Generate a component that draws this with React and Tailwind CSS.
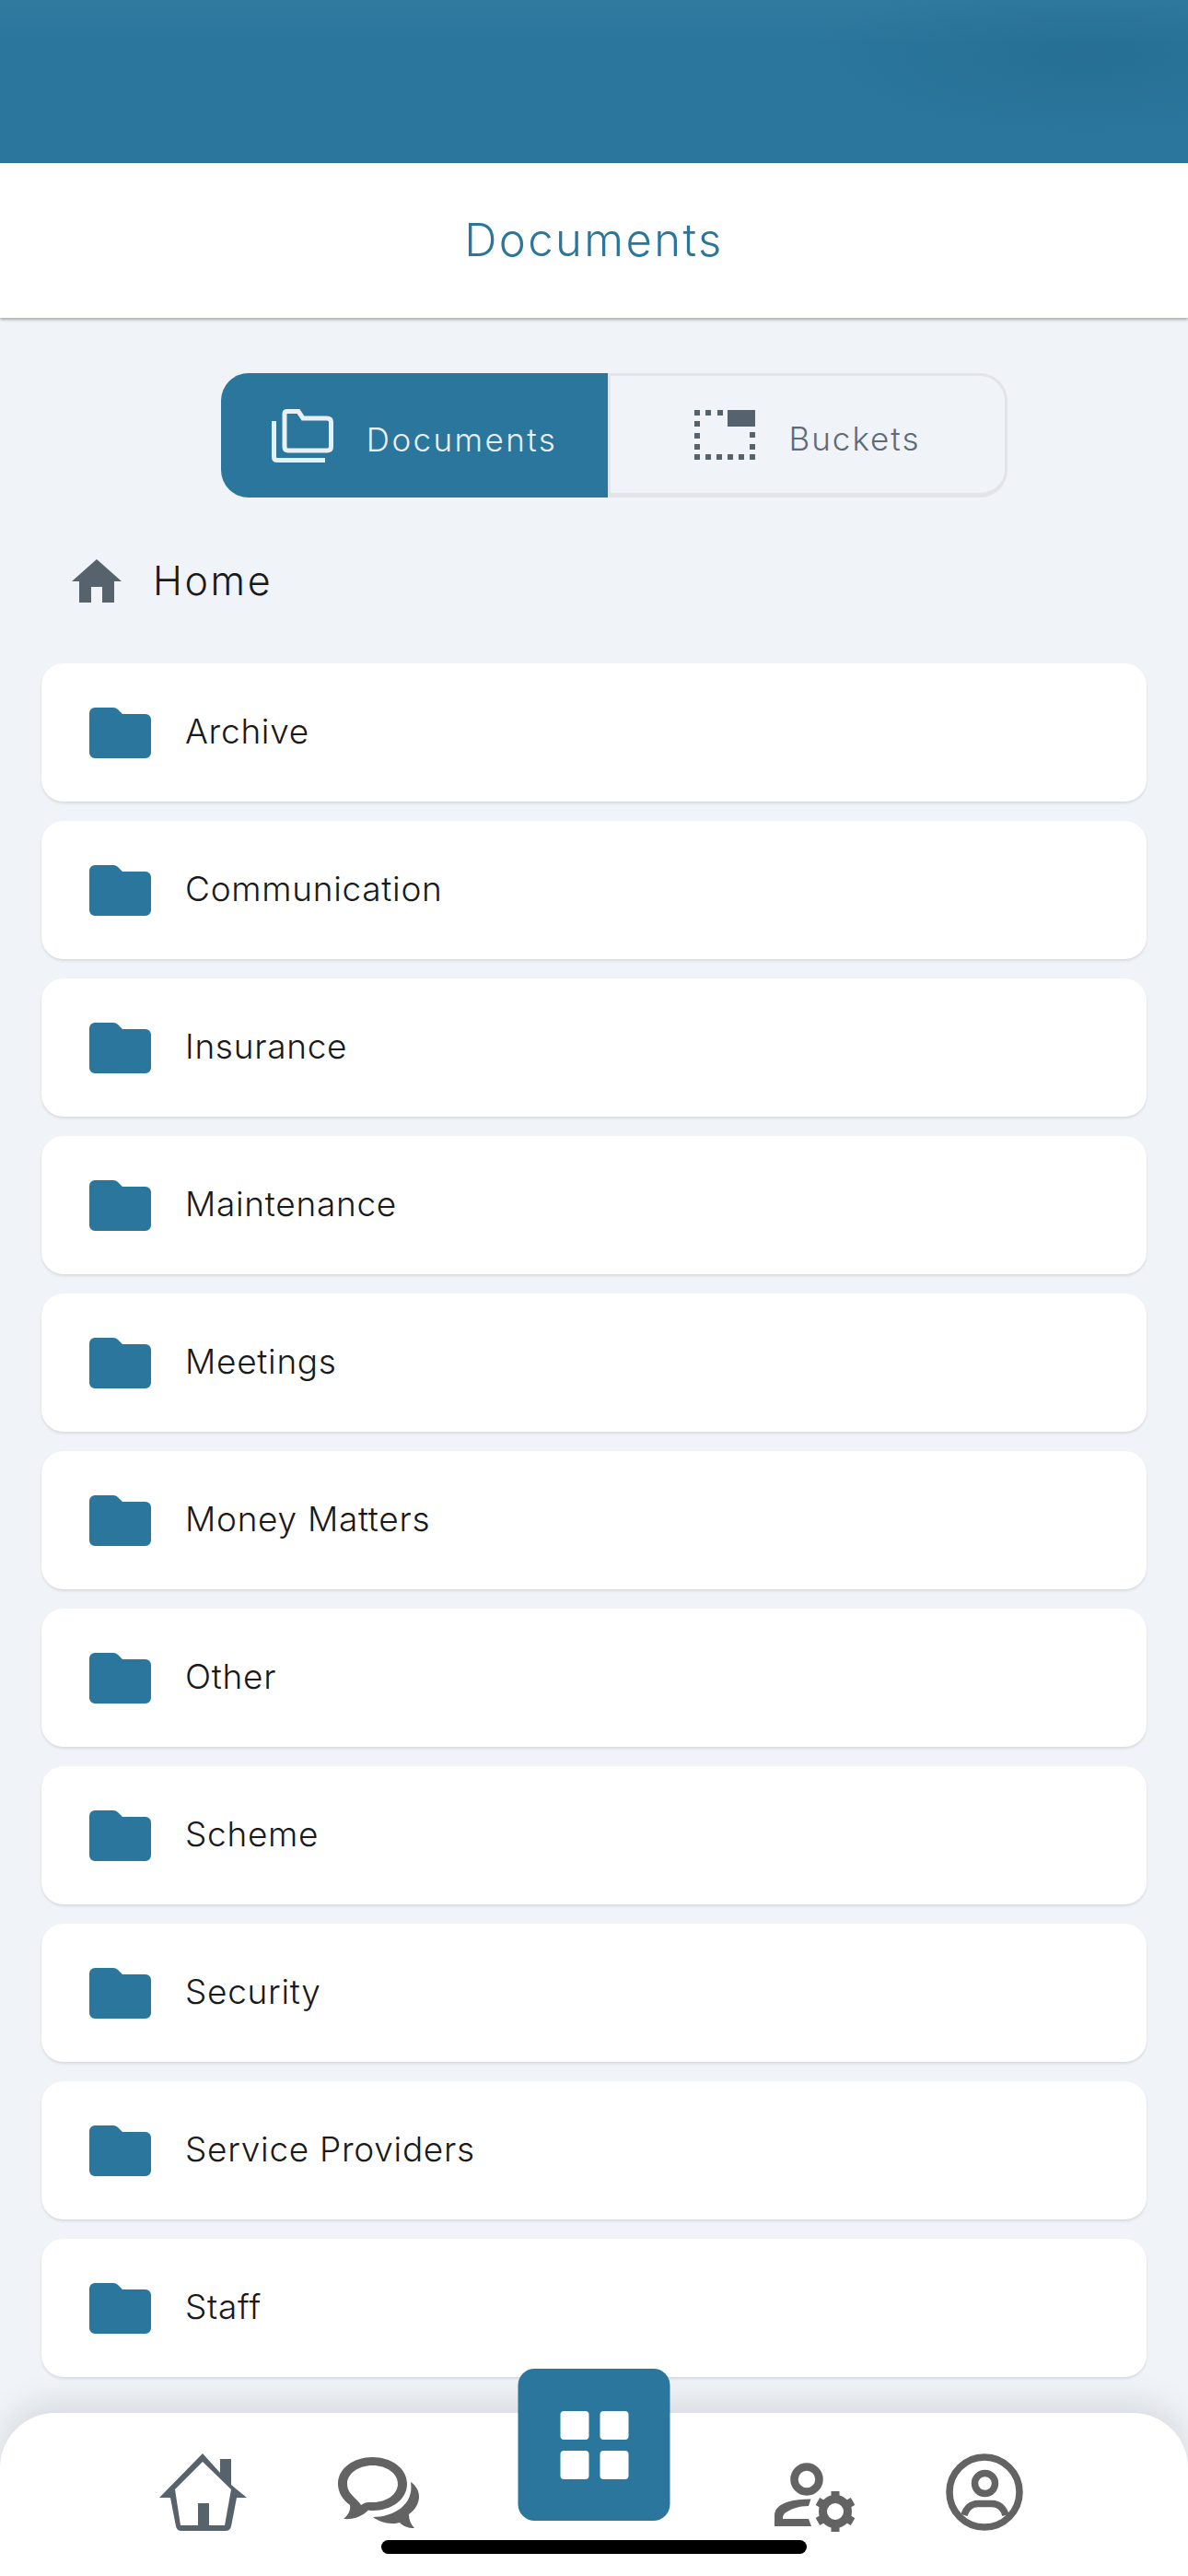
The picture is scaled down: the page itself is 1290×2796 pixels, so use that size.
import React from 'react';

const FOLDERS = [
    'Archive',
    'Communication',
    'Insurance',
    'Maintenance',
    'Meetings',
    'Money Matters',
    'Other',
    'Scheme',
    'Security',
    'Service Providers',
    'Staff',
];

const BUCKET_DOTS = [
    [0, 0], [12, 0], [25, 0],
    [0, 12], [0, 25], [0, 37],
    [60, 24], [60, 37],
    [0, 48], [12, 48], [24, 48], [36, 48], [48, 48], [60, 48],
];

function FolderIcon() {
    return (
        <svg width="67" height="55" viewBox="0 0 67 55" className="shrink-0">
            <path
                fill="#2a769c"
                d="M6 0H26Q29 0 31 2L36 7H61A6 6 0 0 1 67 13V49A6 6 0 0 1 61 55H6A6 6 0 0 1 0 49V6A6 6 0 0 1 6 0Z"
            />
        </svg>
    );
}

function TabFolderIcon() {
    return (
        <svg width="67" height="58" viewBox="0 0 67 58" fill="none" stroke="#e9f0f4" strokeWidth="5">
            <path d="M17 2.500H29L34 10H60Q64.500 10 64.500 14V41Q64.500 45 60 45H18Q14 45 14 41V5Q14 2.500 17 2.500Z" />
            <path d="M2.500 13V52Q2.500 55.500 6 55.500H58" />
        </svg>
    );
}

function BucketIcon() {
    return (
        <svg width="66" height="54" viewBox="0 0 66 54" fill="#56636d">
            <rect x="36" y="0" width="30" height="18" />
            {BUCKET_DOTS.map(([x, y]) => (
                <rect key={`${x}-${y}`} x={x} y={y} width="6" height="6" />
            ))}
        </svg>
    );
}

function SmallHomeIcon() {
    return (
        <svg width="54" height="47" viewBox="0 0 54 47" fill="#56636d">
            <path fillRule="evenodd" d="M27 0L54 24H46V47H33V30H21V47H8V24H0Z" />
        </svg>
    );
}

function NavHomeIcon() {
    return (
        <svg width="95" height="84" viewBox="0 0 95 84" fill="#56636d">
            <path
                fillRule="evenodd"
                d="M47 0L66 21V6H78V34L95 48H84L78 79Q77 84 72 84H24Q19 84 18 79L12 48H0ZM47 9L17 39L23 78H42V54H54V78H71L78 39Z"
            />
        </svg>
    );
}

function ChatIcon() {
    return (
        <svg width="88" height="77" viewBox="0 0 88 77" fill="#636363">
            <path
                fillRule="evenodd"
                d="M37.500 0C58 0 75 12 75 29C75 46 58 58 38 58C36 58 34.500 58 33 57.500C27 64 17 68 6 67C11 63 14 58 13 52C5 46 0 38 0 29C0 12 17 0 37.500 0ZM37.500 9C22 9 10 18 10 29C10 37 15 41 20 46C23 49 24 50 25 52C28 50 30 49 34 49C36 49 37 49 38 49C53 49 65 40 65 29C65 18 53 9 37.500 9Z"
            />
            <path d="M79 27C85 31 88 37 88 43C88 50 84 57 77 62C77 68 79 73 83 77C76 77 71 75 67 71C64 72 61 72 58 72C51 72 43 69 38 65C60 65 83 52 79 27Z" />
        </svg>
    );
}

function PersonGearIcon() {
    const teeth = [0, 60, 120, 180, 240, 300];
    return (
        <svg width="87" height="75" viewBox="0 0 87 75" fill="#636363">
            <circle cx="35" cy="18" r="13.500" fill="none" stroke="#636363" strokeWidth="8.500" />
            <path d="M39.500 39.500L37 47C26 47 18 50 11 55Q9 57 9 61H37L40 69H0V58C0 50 5 46 13 43C21 40 30 39.500 39.500 39.500Z" />
            <circle cx="66" cy="53" r="13.500" fill="none" stroke="#636363" strokeWidth="9" />
            {teeth.map((deg) => (
                <rect key={deg} x="61.500" y="31" width="9" height="9" transform={`rotate(${deg} 66 53)`} />
            ))}
        </svg>
    );
}

function ProfileIcon() {
    return (
        <svg width="84" height="84" viewBox="0 0 84 84" fill="none" stroke="#636363" strokeWidth="7.500">
            <circle cx="42" cy="42" r="38" />
            <circle cx="42.500" cy="32.500" r="11" />
            <path d="M20 67C22 60 27 54.500 35 54.500H50C58 54.500 63 60 65 67" />
        </svg>
    );
}

export default function App() {
    const font = { fontFamily: 'Inter, "Open Sans", sans-serif' };

    return (
        <div style={font} className="w-[1290px] h-[2796px] flex flex-col overflow-hidden bg-[#f0f3f8]">
            <div className="h-[177px] shrink-0 bg-[#2a769c] bg-[radial-gradient(ellipse_300px_90px_at_1180px_60px,rgba(20,70,100,0.14),rgba(20,70,100,0)),linear-gradient(180deg,rgba(255,255,255,0.03),rgba(255,255,255,0)_50px)]" />

            <header className="h-[168px] shrink-0 bg-white flex items-center justify-center shadow-[0_2px_3px_rgba(0,0,0,0.3)]">
                <h1 className="text-[49px] font-light tracking-[2.4px] text-[#2a769c]">Documents</h1>
            </header>

            <div className="mt-[60px] ml-[240px] w-[854px] h-[135px] shrink-0 flex">
                <div className="w-[420px] rounded-l-[30px] bg-[#2a769c] flex items-center justify-center gap-[36px]">
                    <TabFolderIcon />
                    <span className="mt-[10px] text-[35px] font-light tracking-[2.4px] text-[#e9f0f4]">Documents</span>
                </div>
                <div className="flex-1 rounded-r-[30px] border-[3px] border-b-[5px] border-[#e2e4e7] flex items-center justify-center gap-[36px]">
                    <BucketIcon />
                    <span className="mt-[10px] text-[35px] font-light tracking-[2px] text-[#5f6b75]">Buckets</span>
                </div>
            </div>

            <div className="h-[180px] shrink-0 pl-[78px] flex items-center gap-[34px]">
                <SmallHomeIcon />
                <span className="text-[43px] font-light tracking-[2.6px] text-[#1a1a1a]">Home</span>
            </div>

            <div className="relative z-10 flex-1 min-h-0 px-[45px] flex flex-col gap-[21px]">
                {FOLDERS.map((name) => (
                    <div
                        key={name}
                        className="h-[150px] shrink-0 bg-white rounded-[24px] pl-[52px] flex items-center gap-[37px] shadow-[0_2px_3px_rgba(0,0,0,0.1)]"
                    >
                        <FolderIcon />
                        <span className="-mt-[2px] text-[37px] font-light tracking-[0.7px] text-[#1a1a1a]">{name}</span>
                    </div>
                ))}
            </div>

            <nav className="relative h-[177px] shrink-0 bg-white rounded-t-[60px] pl-[173px] pt-[44px] shadow-[0_-12px_36px_rgba(0,0,0,0.1)]">
                <div className="flex items-center h-[84px]">
                    <NavHomeIcon />
                    <div className="ml-[99px]">
                        <ChatIcon />
                    </div>
                    <div className="ml-[386px] mt-[10px]">
                        <PersonGearIcon />
                    </div>
                    <div className="ml-[99px]">
                        <ProfileIcon />
                    </div>
                </div>

                <div className="absolute z-20 left-1/2 -translate-x-1/2 -top-[48px] w-[165px] h-[165px] rounded-[18px] bg-[#2a769c] flex items-center justify-center">
                    <div className="grid grid-cols-2 gap-[12px]">
                        <div className="w-[31px] h-[31px] rounded-[4px] bg-white" />
                        <div className="w-[31px] h-[31px] rounded-[4px] bg-white" />
                        <div className="w-[31px] h-[31px] rounded-[4px] bg-white" />
                        <div className="w-[31px] h-[31px] rounded-[4px] bg-white" />
                    </div>
                </div>

                <div className="absolute z-20 left-1/2 -translate-x-1/2 bottom-[24px] w-[462px] h-[15px] rounded-full bg-black" />
            </nav>
        </div>
    );
}
